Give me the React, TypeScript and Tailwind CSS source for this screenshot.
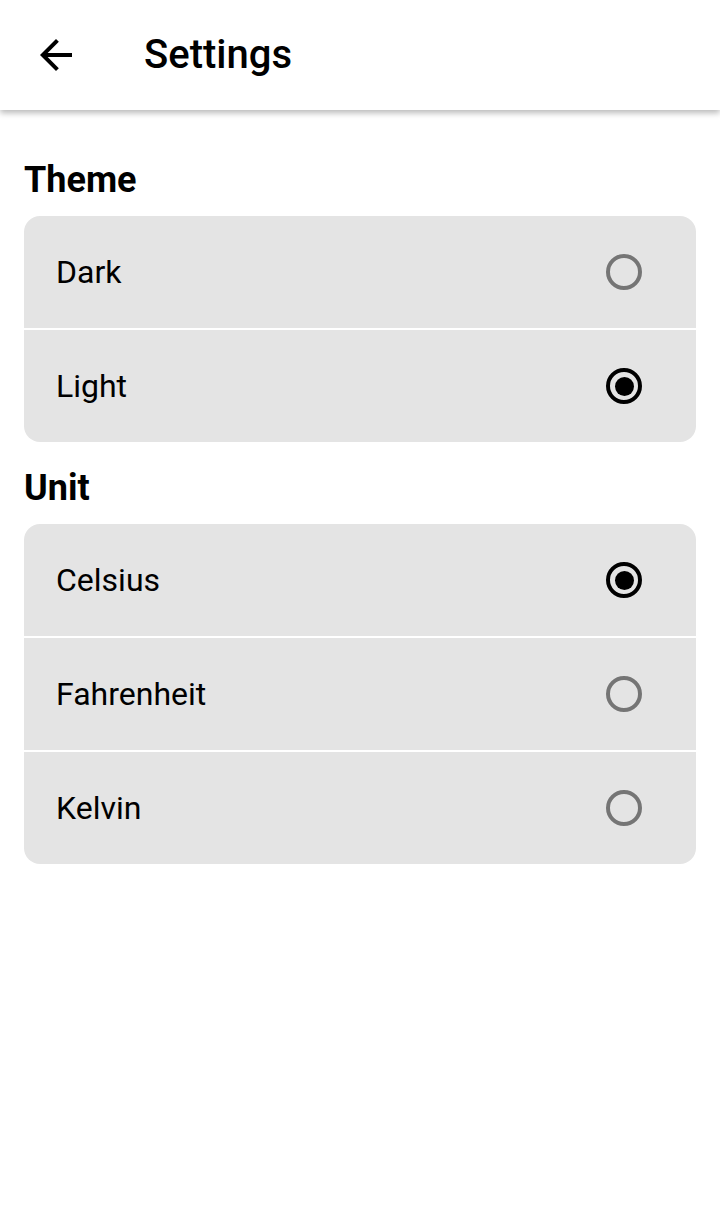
import React, { useState } from 'react'

const THEMES = ['Dark', 'Light']
const UNITS = ['Celsius', 'Fahrenheit', 'Kelvin']

function Radio({ checked }: { checked: boolean }) {
  return checked ? (
    <span className="flex h-[36px] w-[36px] shrink-0 items-center justify-center rounded-full border-[4px] border-black">
      <span className="h-[19px] w-[19px] rounded-full bg-black" />
    </span>
  ) : (
    <span className="h-[36px] w-[36px] shrink-0 rounded-full border-[4px] border-[#757575]" />
  )
}

function Section({
  title,
  options,
  value,
  onChange,
}: {
  title: string
  options: string[]
  value: string
  onChange: (v: string) => void
}) {
  return (
    <section>
      <h2 className="mb-[15px] h-[44px] text-[36px] font-bold leading-[46px] text-black">{title}</h2>
      <div className="flex flex-col gap-[2px] overflow-hidden rounded-[16px]">
        {options.map((opt) => (
          <button
            key={opt}
            className="flex h-[112px] items-center justify-between bg-[#e4e4e4] pl-[32px] pr-[54px] text-left"
            onClick={() => onChange(opt)}
          >
            <span className="text-[32px] text-black">{opt}</span>
            <Radio checked={value === opt} />
          </button>
        ))}
      </div>
    </section>
  )
}

export default function App() {
  const [theme, setTheme] = useState('Light')
  const [unit, setUnit] = useState('Celsius')

  return (
    <div className="min-h-[1230px] w-[720px] bg-white font-['Roboto',sans-serif]">
      {/* App bar */}
      <header className="relative z-10 flex h-[110px] items-center bg-white shadow-[0_3px_6px_rgba(0,0,0,0.28)]">
        <button className="ml-[32px] flex h-[48px] w-[48px] items-center justify-center">
          <svg viewBox="0 0 24 24" className="h-[48px] w-[48px]" fill="#000">
            <path d="M20 11H7.83l5.59-5.59L12 4l-8 8 8 8 1.41-1.41L7.83 13H20v-2z" />
          </svg>
        </button>
        <h1 className="ml-[64px] text-[40px] font-medium leading-[48px] text-black">Settings</h1>
      </header>

      {/* Content */}
      <main className="flex flex-col gap-[23px] px-[24px] pt-[47px]">
        <Section title="Theme" options={THEMES} value={theme} onChange={setTheme} />
        <Section title="Unit" options={UNITS} value={unit} onChange={setUnit} />
      </main>
    </div>
  )
}
